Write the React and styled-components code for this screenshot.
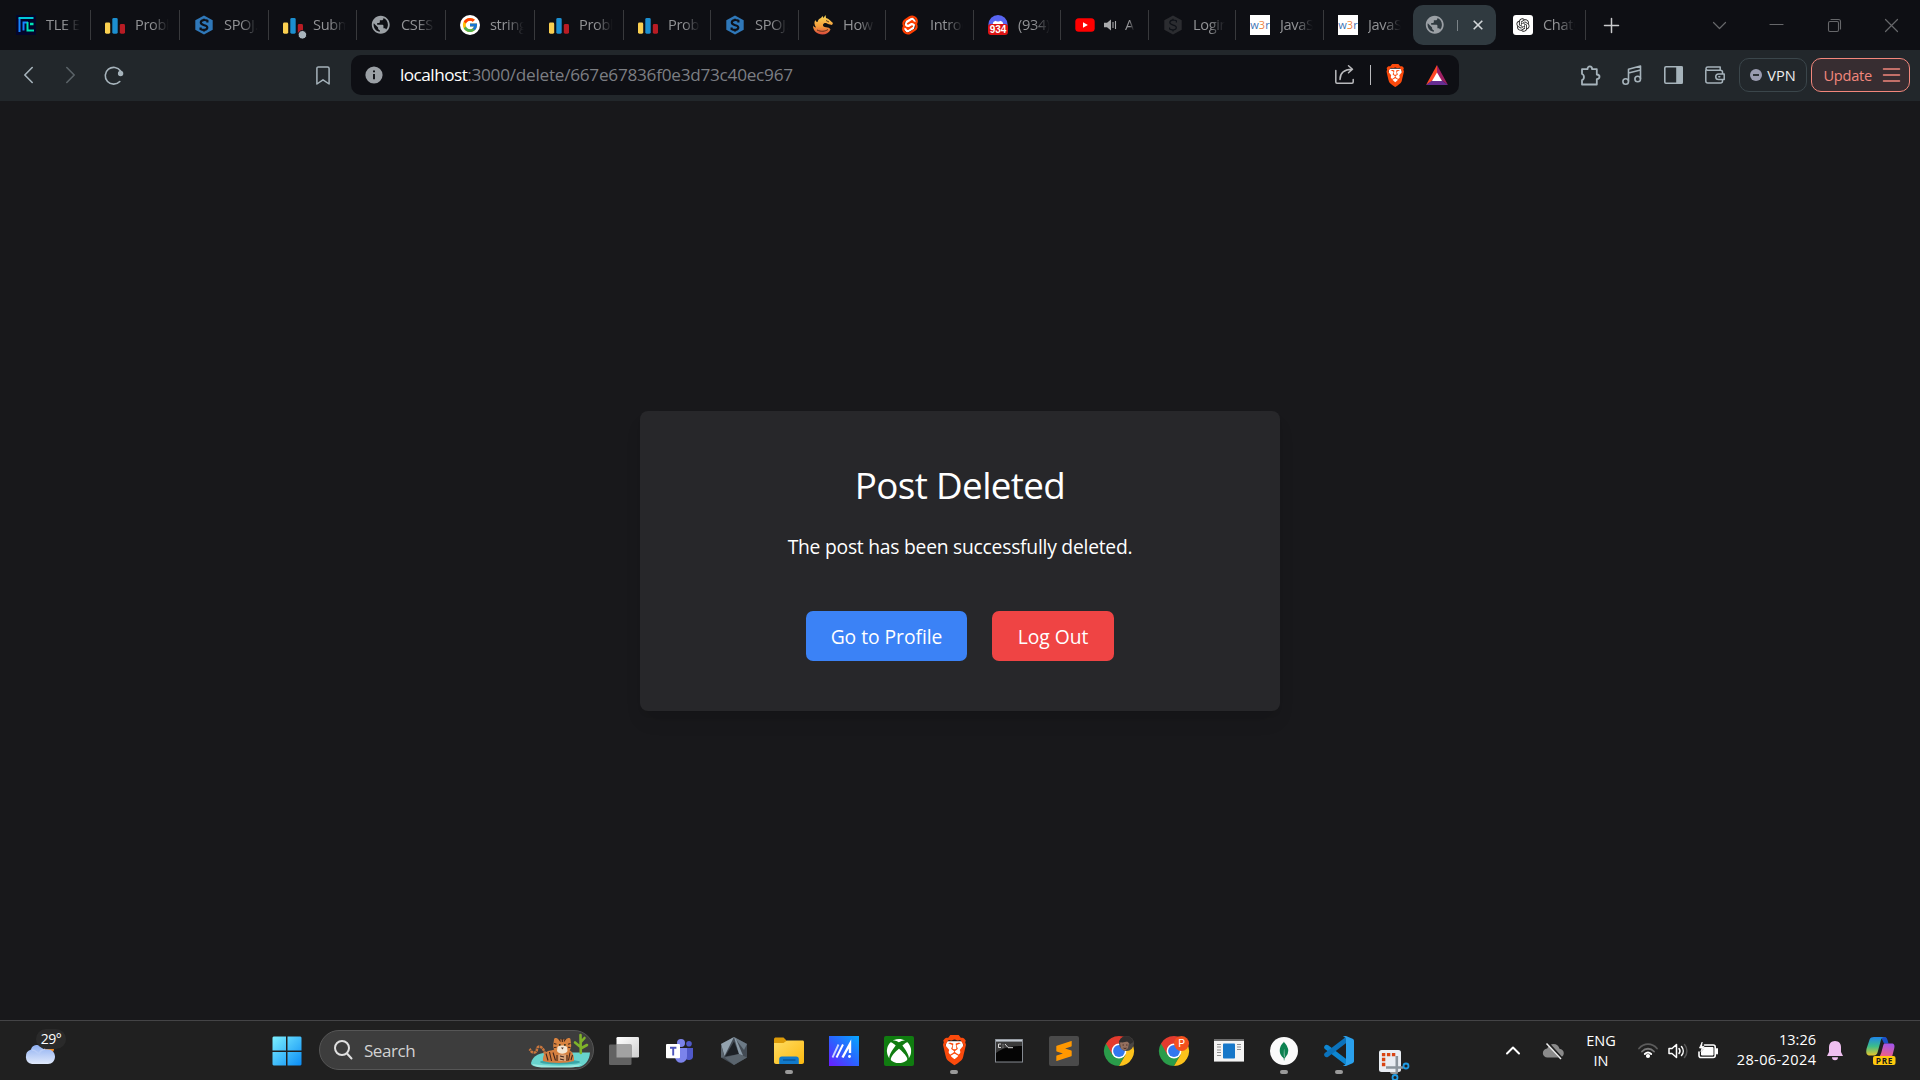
import React from 'react';
import styled, { createGlobalStyle, css } from 'styled-components';
import { SiBrave, SiSvelte, SiSublimetext, SiMongodb } from 'react-icons/si';
import { FaXbox } from 'react-icons/fa';
import { FcGoogle } from 'react-icons/fc';
import { MdPublic } from 'react-icons/md';
import { RiOpenaiFill } from 'react-icons/ri';

const GlobalStyle = createGlobalStyle`
  * { box-sizing: border-box; }
  html, body { margin: 0; padding: 0; background: #18181b; overflow: hidden; }
  body { font-family: "Open Sans", "Noto Sans", sans-serif; color: #fff; }
  svg { display: block; flex: none; overflow: visible; }
`;

const Screen = styled.div`
  width: 1920px;
  height: 1080px;
  display: flex;
  flex-direction: column;
`;

/* ---------- Tab strip ---------- */
const TabStrip = styled.header`
  height: 50px;
  flex: none;
  display: flex;
  align-items: center;
  background: #0e0f14;
  padding-left: 2px;
`;
const Tab = styled.div`
  width: ${(p) => p.$w}px;
  height: 30px;
  flex: none;
  display: flex;
  align-items: center;
  padding-left: 14px;
  padding-right: ${(p) => p.$end || 10}px;
  margin-left: ${(p) => p.$gap || 0}px;
  border-right: ${(p) => (p.$last ? 'none' : '1px solid #38393c')};
`;
const TabIcon = styled.span`
  width: 20px;
  height: 20px;
  flex: none;
  display: flex;
  align-items: center;
  justify-content: center;
  margin-right: 10px;
`;
const TabTitle = styled.span`
  flex: 1;
  min-width: 0;
  overflow: hidden;
  white-space: nowrap;
  font-size: 14.6px;
  line-height: 22px;
  padding-bottom: 2px;
  letter-spacing: -0.35px;
  color: #929396;
  -webkit-mask-image: linear-gradient(90deg, #000 50%, transparent 100%);
  mask-image: linear-gradient(90deg, #000 50%, transparent 100%);
`;
const AudioMark = styled.span`
  flex: none;
  margin-right: 8px;
  margin-left: -1px;
`;
const ActiveTab = styled.div`
  width: 83px;
  height: 40px;
  flex: none;
  display: flex;
  align-items: center;
  padding-left: 12px;
  border-radius: 10px;
  background: #303a40;
`;
const TitleSliver = styled.span`
  width: 1px;
  height: 11px;
  margin-left: 2px;
  background: #7b8388;
`;
const NewTab = styled.div`
  margin-left: 17.5px;
`;
const WindowButtons = styled.div`
  margin-left: auto;
  display: flex;
  align-items: center;
`;
const WindowButton = styled.span`
  width: 57.3px;
  height: 49px;
  display: flex;
  align-items: center;
  justify-content: center;
`;

/* ---------- Toolbar ---------- */
const Toolbar = styled.nav`
  height: 51px;
  flex: none;
  display: flex;
  align-items: center;
  padding-bottom: 1px;
  background: #22272b;
`;
const NavButtons = styled.div`
  width: 351px;
  padding: 0 7px;
  display: flex;
`;
const ToolButton = styled.span`
  width: ${(p) => p.$w || 42.5}px;
  height: 40px;
  display: flex;
  align-items: center;
  justify-content: center;
  ${(p) => p.$push && css`margin-left: auto;`}
`;
const AddressBar = styled.div`
  width: 1108px;
  height: 40px;
  border-radius: 10px;
  background: #0e0f14;
  display: flex;
  align-items: center;
  padding: 0 11px 0 14px;
`;
const Url = styled.span`
  margin-left: 17px;
  font-size: 17.2px;
  line-height: 24px;
  padding-bottom: 1px;
  letter-spacing: -0.26px;
  color: #7c7e83;
  white-space: nowrap;
`;
const Host = styled.span`
  color: #fff;
  letter-spacing: -0.53px;
`;
const AddressActions = styled.div`
  margin-left: auto;
  display: flex;
  align-items: center;
`;
const Divider = styled.span`
  width: 1px;
  height: 20px;
  background: #b9babd;
  margin: 0 14px 0 16px;
`;
const ToolGroup = styled.div`
  margin-left: auto;
  display: flex;
  align-items: center;
  padding-right: 10px;
`;
const ToolIcons = styled.div`
  display: flex;
  margin-right: 3px;
`;
const PillButton = styled.span`
  height: 34px;
  width: ${(p) => p.$w}px;
  display: flex;
  align-items: center;
  justify-content: center;
  padding-left: ${(p) => p.$shift || 0}px;
  gap: ${(p) => p.$gap}px;
  border-radius: 10px;
  border: 1px solid ${(p) => p.$line};
  background: ${(p) => p.$fill};
  color: ${(p) => p.$ink};
  font-size: 14.6px;
  line-height: 20px;
  letter-spacing: ${(p) => p.$track}px;
  margin-right: ${(p) => p.$after || 0}px;
`;

/* ---------- Page ---------- */
const Page = styled.main`
  flex: 1;
  display: flex;
  align-items: center;
  justify-content: center;
  background: #18181b;
`;
const Card = styled.section`
  width: 640px;
  height: 300px;
  padding: 52px 50px 50px;
  border-radius: 8px;
  background: #27272a;
  box-shadow: 0 12px 19px -4px rgba(0, 0, 0, 0.1), 0 5px 8px -5px rgba(0, 0, 0, 0.1);
  text-align: center;
  margin-top: 1px;
`;
const Title = styled.h1`
  margin: 0 0 24px;
  font-size: 36.8px;
  font-weight: 400;
  line-height: 45px;
  letter-spacing: -0.65px;
`;
const Message = styled.p`
  margin: 0 0 49px;
  font-size: 19.3px;
  line-height: 30px;
  letter-spacing: -0.24px;
`;
const Actions = styled.div`
  display: flex;
  justify-content: center;
  gap: 25px;
`;
const ActionButton = styled.button`
  width: ${(p) => p.$w}px;
  height: 50px;
  padding: 2px 0 0;
  border: 0;
  border-radius: 7px;
  background: ${(p) => p.$color};
  color: #fff;
  font: 400 19.3px/30px "Open Sans", "Noto Sans", sans-serif;
  letter-spacing: -0.04px;
`;

/* ---------- Taskbar ---------- */
const Taskbar = styled.footer`
  height: 60px;
  flex: none;
  display: flex;
  background: #202020;
  border-top: 1px solid #444446;
`;
const Weather = styled.div`
  width: 259.500px;
  padding: 8px 0 0 24px;
  position: relative;
`;
const Degrees = styled.span`
  position: absolute;
  left: 36px;
  top: 8px;
  width: 30px;
  height: 20px;
  border-radius: 10px;
  background: #2a2a2a;
  text-align: center;
  font-size: 14px;
  line-height: 20px;
  letter-spacing: -0.5px;
`;
const TaskSlot = styled.div`
  width: 55px;
  height: 59px;
  position: relative;
  display: flex;
  align-items: center;
  justify-content: center;
  flex: none;
  &::after {
    content: '';
    display: ${(p) => (p.$running ? 'block' : 'none')};
    position: absolute;
    left: 23.5px;
    bottom: 6px;
    width: 8px;
    height: 4px;
    border-radius: 2px;
    background: #9a9a9a;
  }
`;
const SearchBox = styled.div`
  width: 275px;
  height: 40px;
  margin: 9px 2.5px 0 4.5px;
  padding-left: 14px;
  border-radius: 20px;
  border: 1px solid #565656;
  background: #3d3d3d;
  display: flex;
  align-items: center;
  flex: none;
`;
const SearchLabel = styled.span`
  margin-left: 12px;
  padding-top: 2px;
  font-size: 17px;
  line-height: 24px;
  letter-spacing: -0.45px;
  color: #d2d2d2;
`;
const Tiger = styled.span`
  margin-left: auto;
  margin-right: 3px;
`;
const Tray = styled.div`
  margin-left: auto;
  display: flex;
  align-items: center;
  padding-right: 13px;
`;
const TrayItem = styled.span`
  width: ${(p) => p.$w}px;
  display: flex;
  justify-content: center;
`;
const TrayText = styled.div`
  width: ${(p) => p.$w}px;
  padding-bottom: ${(p) => p.$lift || 0}px;
  text-align: ${(p) => p.$align};
  font-size: 14.5px;
  line-height: 20px;
  white-space: nowrap;
`;
const DateLine = styled.div`
  letter-spacing: 0.4px;
  margin-right: -0.4px;
`;

/* ---------- Favicons ---------- */
const TleIcon = () => (
  <svg width="20" height="20" viewBox="0 0 20 20" fill="none">
    <rect width="20" height="20" fill="#03052b" />
    <path d="M3.500 17V3.500" stroke="#1684ff" strokeWidth="2" />
    <path d="M2.500 3h15" stroke="#00c9d8" strokeWidth="2" />
    <path d="M7.500 15.500V7.500H12" stroke="#1684ff" strokeWidth="2" />
    <path d="M11.500 7v8.500h6.500" stroke="#00e5b4" strokeWidth="2" />
    <path d="M14 9h3.500" stroke="#00e5b4" strokeWidth="2.500" />
  </svg>
);
const CodeforcesIcon = ({ dot }) => (
  <svg width="20" height="20" viewBox="0 0 20 20">
    <rect x="0" y="7.500" width="5.200" height="11.200" rx="1.400" fill="#fbd050" />
    <rect x="7.300" y="3" width="5.400" height="15.700" rx="1.400" fill="#1c8fd0" />
    <rect x="14.800" y="9" width="5.200" height="9.700" rx="1.400" fill="#b81c24" />
    {dot && <circle cx="19.400" cy="19.800" r="4.300" fill="#a9b5bd" stroke="#0e0f14" />}
  </svg>
);
const SpojIcon = ({ dim }) => (
  <svg width="20" height="20" viewBox="0 0 20 20">
    <path d="M10 .4 18.700 5.200v9.600L10 19.600 1.300 14.800V5.200z" fill={dim ? '#2b2c30' : '#2f78b9'} />
    <path d="M13.400 7.400V5.800C11.500 4.600 6.800 4.500 6.800 7.600c0 3.300 6.500 1.900 6.500 4.900 0 2.900-4.600 2.800-6.700 1.600v-1.700M10 3.800v2M10 14.500v2" fill="none" stroke="#0e1117" strokeWidth={dim ? 1.2 : 2.2} />
  </svg>
);
const DragonIcon = () => (
  <svg width="20" height="20" viewBox="0 0 20 20">
    <defs>
      <linearGradient id="dragon" x1="0" y1="0" x2="0" y2="1">
        <stop offset="0" stopColor="#f9d956" />
        <stop offset="0.6" stopColor="#f59a3b" />
        <stop offset="1" stopColor="#d9483c" />
      </linearGradient>
    </defs>
    <path d="M8 3 9.500 1l1 2L12.500 0l.5 3c3 .5 4.500 3 7 5l-1 2-4-1c-2-1.500-4.500-1-5 .8-.3 1.600 1 2.200 3 2.400 2 .2 3.800.6 4.500 2.300-1.500 3.500-4.500 5-8 5C4 19.500 0 16 0 10.500 1 12 2 12.500 3 12.400 1 9.500 1 7 2.500 5c.5 1.500 1 2 2 2C5 4.500 6.500 3.500 8 3z" fill="url(#dragon)" />
    <path d="M13 5.500 16 7M4 15c4 2 8 1.500 11-.5" stroke="#3c1d15" strokeWidth="0.8" fill="none" />
  </svg>
);
const DiscordIcon = () => (
  <svg width="20" height="20" viewBox="0 0 20 20">
    <circle cx="10" cy="9.500" r="9.600" fill="#5865f2" />
    <path d="M4.800 9C5 7 6 6.100 8 5.700l.7.700h2.600l.7-.7c2 .4 3 1.300 3.200 3.300z" fill="#fff" />
    <rect x="0" y="9" width="20" height="11" rx="3" fill="#dd1414" />
    <text x="10" y="17.800" textAnchor="middle" fontFamily="Liberation Sans, sans-serif" fontWeight="700" fontSize="10" fill="#fff">934</text>
  </svg>
);
const YoutubeIcon = () => (
  <svg width="20" height="20" viewBox="0 0 20 20">
    <rect x="0.300" y="3.200" width="19.400" height="13.600" rx="3.500" fill="#f00" />
    <path d="M8 7.200v5.600l4.900-2.800z" fill="#fff" />
  </svg>
);
const AudioIcon = () => (
  <svg width="13" height="14" viewBox="0 0 13 14">
    <path d="M0 4.800h3L7 1.500v11L3 9.200H0z" fill="#a9aaac" />
    <path d="M9 4v6M11.500 3v8" stroke="#a9aaac" strokeWidth="1.100" />
  </svg>
);
const W3rIcon = () => (
  <svg width="20" height="20" viewBox="0 0 20 20">
    <rect width="20" height="20" fill="#fff" />
    <text x="10" y="13.800" textAnchor="middle" fontFamily="Open Sans, sans-serif" fontSize="11" fill="#3f74b5">
      w<tspan fill="#ee8544">3</tspan>r
    </text>
  </svg>
);
const SvelteTile = () => (
  <svg width="20" height="20" viewBox="0 0 20 20">
    <path d="M6 5 12.500 2 16 6l-2 8-7 4-3.500-4z" fill="#fff" />
    <SiSvelte x="0.500" y="0.500" size={19} color="#ff3e00" />
  </svg>
);
const GoogleIcon = () => (
  <svg width="20" height="20" viewBox="0 0 20 20">
    <circle cx="10" cy="10" r="10" fill="#fff" />
    <FcGoogle x="1.500" y="1.500" size={17} />
  </svg>
);
const GptIcon = () => (
  <svg width="20" height="20" viewBox="0 0 20 20">
    <rect width="20" height="20" rx="3" fill="#fff" />
    <RiOpenaiFill x="2" y="2" size={16} color="#222" />
  </svg>
);
const GlobeIcon = () => <MdPublic size={21.500} color="#9ba0a5" />;

const TABS = [
  { w: 89, title: 'TLE Eliminators', Icon: TleIcon },
  { w: 89, title: 'Problem', Icon: CodeforcesIcon },
  { w: 89, title: 'SPOJ.com', Icon: SpojIcon },
  { w: 88, title: 'Submissions', Icon: () => <CodeforcesIcon dot /> },
  { w: 89, title: 'CSES', Icon: GlobeIcon },
  { w: 89, title: 'string', Icon: GoogleIcon },
  { w: 89, title: 'Problem', Icon: CodeforcesIcon },
  { w: 87, title: 'Problem', Icon: CodeforcesIcon },
  { w: 88, title: 'SPOJ.com', Icon: SpojIcon },
  { w: 87, title: 'How to', Icon: DragonIcon },
  { w: 88, title: 'Introduction', Icon: SvelteTile },
  { w: 87, title: '(934)', Icon: DiscordIcon },
  { w: 88, title: 'A', Icon: YoutubeIcon, audio: true, end: 14 },
  { w: 87, title: 'Login', Icon: () => <SpojIcon dim /> },
  { w: 88, title: 'JavaScript', Icon: W3rIcon },
  { w: 89, title: 'JavaScript', Icon: W3rIcon, last: true, end: 12 },
];

/* ---------- Window and toolbar glyphs ---------- */
const Glyph = ({ w, h, color = '#a6b3bb', sw = 1.5, d, children }) => (
  <svg width={w} height={h} viewBox={`0 0 ${w} ${h}`} fill="none" stroke={color} strokeWidth={sw} strokeLinecap="round" strokeLinejoin="round">
    {d && <path d={d} />}
    {children}
  </svg>
);
const BraveLogo = ({ size }) => (
  <svg width={size} height={size * 1.12} viewBox="0 0 24 24" preserveAspectRatio="none">
    <path d="M5 5h14l1 5-3 8-5 4-5-4-3-8z" fill="#fff" />
    <SiBrave x="0" y="0" size={24} color="#fb4a0c" />
  </svg>
);

/* ---------- Taskbar icons ---------- */
const CloudIcon = () => (
  <svg width="34" height="38" viewBox="0 0 34 38">
    <defs>
      <linearGradient id="cloud" x1="0" y1="0" x2="0" y2="1">
        <stop offset="0" stopColor="#8fb0f2" />
        <stop offset="1" stopColor="#e0e9fb" />
      </linearGradient>
    </defs>
    <circle cx="25" cy="20" r="5" fill="#f08a24" />
    <path d="M8 35a7.500 7.500 0 0 1-1-14.500C8 17 10.500 16 13 16c3 0 5 1.800 6.500 4.500C27 19 31 23 31 27.500c0 4.500-3 7.500-7 7.500z" fill="url(#cloud)" />
    <path d="M8 21c4 0 5 3 7 4 1-3 3-4.500 6-4.800" fill="none" stroke="#b9cdf7" strokeWidth="1.500" />
  </svg>
);
const WindowsLogo = () => (
  <svg width="30" height="30" viewBox="0 0 30 30">
    <defs>
      <linearGradient id="win" x1="0" y1="0" x2="1" y2="1">
        <stop offset="0" stopColor="#7cf0ff" />
        <stop offset="1" stopColor="#0a8cf5" />
      </linearGradient>
    </defs>
    <path d="M1.500.5H14v14H.500v-13zM15.500.5h13l1 1v13h-14zM.500 16H14v13.500H1.500l-1-1zM15.500 16h14v12.500l-1 1h-13z" fill="url(#win)" />
  </svg>
);
const TigerIcon = () => (
  <svg width="64" height="40" viewBox="0 0 64 40">
    <path d="M5 33C7 25 14 22.500 24 22.500h40c-.5 7-4 13-11 14.500H17C9 37 5 36 5 33z" fill="#68d3cd" />
    <path d="M6 34c14 2 34 3 50 0-3 2-7 3.500-11 3.500H18C11 37.500 8 36 6 34z" fill="#9be8df" />
    <ellipse cx="34" cy="32" rx="20" ry="2.500" fill="#3aa6a8" />
    <path d="M19 24c-1-6-5-8.500-7-7s0 5-3.500 5.500S5 20.500 3.500 19" fill="none" stroke="#c9763d" strokeWidth="2.500" strokeDasharray="2.600 .7" />
    <path d="M17 31c-.5-6 2-10 8-10.500l5-1.500h11c5 1.500 7.500 6 7 12-7 2.500-24 2.500-31 0z" fill="#d57f40" />
    <path d="M28 9.500c0-2 3-2 4.500 0h7.500c1.500-2 4.500-2 4.500 0l.7 6c0 5-4 8.500-9 8.500s-9-3.500-9-8.500z" fill="#d9833f" />
    <path d="M31.500 17c2-2 7-2 9.500 0l.5 4c-2 3.500-8.500 3.500-10.500 0z" fill="#f3e6d4" />
    <path d="M32.500 24.500h7.500V31h-7.500z" fill="#d9a378" />
    <path d="M33 9l1.500 2.500M36.300 8.500v3.500M39.500 9 38 11.500M28 13.500l2.500.7M44.500 13.500l-2.500.7M28 17.500l2.500-.3M44.500 17.500l-2.500-.3M20 23.500l2 7M23.500 22l2 9M27 22.500l2.500 8M31 25v6M41 25v6M44 22.500l-1.500 8M46.500 25l-1.500 5M34 26l4 1M34 29l4 1" stroke="#42271d" strokeWidth="1.100" />
    <circle cx="33.800" cy="14.800" r="0.900" fill="#1d2a1c" />
    <circle cx="38.900" cy="14.800" r="0.900" fill="#1d2a1c" />
    <path d="M35 17.500h2.800L36.400 19.400z" fill="#51342a" />
    <path d="M54.800 23 54.500 5M54.500 17l-5.500-4.500M54.700 18.500 61 15M54.500 12.500 58.500 8" fill="none" stroke="#7fb32a" strokeWidth="2.600" strokeLinecap="round" />
  </svg>
);
const TaskViewIcon = () => (
  <svg width="30" height="28" viewBox="0 0 30 28">
    <defs>
      <linearGradient id="tv" x1="0" y1="0" x2="1" y2="1">
        <stop offset="0" stopColor="#fff" />
        <stop offset="1" stopColor="#cfcfcf" />
      </linearGradient>
    </defs>
    <rect x="7.500" y="0" width="22.500" height="20.500" rx="1.300" fill="url(#tv)" />
    <rect x="0" y="7.500" width="22.500" height="20.500" rx="1.300" fill="#626262" />
    <path d="M7.500 7.500h15v13h-15z" fill="#a2a2a2" />
  </svg>
);
const TeamsIcon = () => (
  <svg width="27" height="24" viewBox="0 0 27 24">
    <circle cx="23" cy="4.800" r="2.800" fill="#5059c9" />
    <path d="M18 9h9v7.500a4 4 0 0 1-8 1z" fill="#5059c9" />
    <circle cx="15" cy="4" r="4" fill="#7b83eb" />
    <path d="M9 9h12v8.500a6 6 0 0 1-12 .5z" fill="#7b83eb" />
    <rect x="0" y="5" width="14" height="14.300" rx="1" fill="#fff" />
    <path d="M4 8.700h6.400M7.200 8.700v7.800" stroke="#4b53bc" strokeWidth="1.900" />
  </svg>
);
const HexIcon = () => (
  <svg width="26" height="28" viewBox="0 0 26 28">
    <path d="M13 0 26 7v13.500L13 28 0 20.500V7z" fill="#434b54" />
    <path d="M13 0 0 7l3.500 12z" fill="#93a2ae" />
    <path d="M13 0l13 7-3 6z" fill="#6c7a86" />
    <path d="M13 4.500 4 19.500 18 17z" fill="#1d2126" />
    <path d="M18 17 3.500 20.500 13 28l13-7.500z" fill="#5a646d" />
    <path d="M13 0l5 17 4 1.500L15 2z" fill="#8b9ba8" />
    <path d="M0 7l3.500 13.500L0 20.500z" fill="#5b656e" />
  </svg>
);
const FolderIcon = () => (
  <svg width="30" height="28" viewBox="0 0 30 28">
    <defs>
      <linearGradient id="folder" x1="0" y1="0" x2="1" y2="1">
        <stop offset="0" stopColor="#ffdc62" />
        <stop offset="1" stopColor="#fcb90f" />
      </linearGradient>
    </defs>
    <path d="M0 2.500C0 1 .8.500 2 .500h7.500L13 4v4H0z" fill="#dd9b08" />
    <path d="M0 6h9.500L13 3.500h15.500c1 0 1.500.6 1.500 1.600V25c0 1.200-.8 2-2 2H2c-1.200 0-2-.8-2-2z" fill="url(#folder)" />
    <path d="M5.200 27v-5a2.600 2.600 0 0 1 2.600-2.600h14.400A2.600 2.600 0 0 1 24.800 22v5z" fill="#117acb" />
    <path d="M9 23h12.500" stroke="#0a4d8c" strokeWidth="1.200" />
  </svg>
);
const MyAsusIcon = () => (
  <svg width="30" height="30" viewBox="0 0 30 30">
    <defs>
      <linearGradient id="asus" x1="0" y1="1" x2="1" y2="0">
        <stop offset="0" stopColor="#6a1cff" />
        <stop offset="0.500" stopColor="#2a63ff" />
        <stop offset="1" stopColor="#06a8ff" />
      </linearGradient>
    </defs>
    <rect width="30" height="30" fill="url(#asus)" />
    <path d="M3.500 21.500 9.500 8.500" stroke="#c9d6ff" strokeWidth="1.800" />
    <path d="M7.500 21.500 14 8.500" stroke="#fff" strokeWidth="2" />
    <path d="M13.500 21.500 21 8v9" stroke="#fff" strokeWidth="2.400" fill="none" />
    <circle cx="20.500" cy="20.500" r="1.400" fill="#fff" />
  </svg>
);
const XboxIcon = () => (
  <svg width="30" height="30" viewBox="0 0 30 30">
    <rect width="30" height="30" rx="2" fill="#107c10" />
    <FaXbox x="2.500" y="2.500" size={25} color="#fff" />
  </svg>
);
const CmdIcon = () => (
  <svg width="28" height="24" viewBox="0 0 28 24">
    <rect x="0.500" y="0.500" width="27" height="22.500" fill="#050505" stroke="#858a91" />
    <path d="M1 1.700h26" stroke="#c3cad2" strokeWidth="2" />
    <path d="M1 3v11C9 8 17 7 27 7V3z" fill="#3b3b3b" />
    <path d="M6 5H3.500v3.500H6M8 5.500v.8M8 7.700v.8M10 5l3 3.500M13 8.700h5" fill="none" stroke="#d8d8d8" />
  </svg>
);
const SublimeTile = () => (
  <svg width="30" height="30" viewBox="0 0 30 30">
    <rect width="30" height="30" rx="2" fill="#4a4a4a" />
    <SiSublimetext x="5" y="5" size={20} color="#ff9800" />
  </svg>
);
const ChromeIcon = ({ badge }) => (
  <svg width="30" height="30" viewBox="0 0 30 30">
    <path d="M2 7.500A15 15 0 0 0 15 30l6.500-11.300z" fill="#2a9c4a" />
    <path d="M15 7.500h13a15 15 0 0 1-13 22.500l6.500-11.300z" fill="#fcc21b" />
    <path d="M2 7.500A15 15 0 0 1 28 7.500H15L8.500 18.700z" fill="#e33b2e" />
    <circle cx="15" cy="15" r="7.400" fill="#fff" />
    <circle cx="15" cy="15" r="5.900" fill="#3277ee" />
    {badge === 'P' ? (
      <>
        <circle cx="22.500" cy="7.500" r="7.500" fill="#f4511e" />
        <text x="22.500" y="11.300" textAnchor="middle" fontFamily="Roboto, sans-serif" fontSize="10.500" fill="#fff">P</text>
      </>
    ) : (
      <>
        <circle cx="22.500" cy="7.500" r="7.500" fill="#4a4643" />
        <path d="M16 7c2-3 7-3 9 0l-1 5c-2 3-5 3-7 .5z" fill="#94705f" />
        <path d="M15.300 6c1-7 12-8 14 0l-3 2-3-2.500-5 1z" fill="#302e2e" />
        <path d="M18.500 9h1.500M22 9h1.500M19.500 12c1 .5 2 .5 3 0" stroke="#4a2e25" strokeWidth="0.900" />
      </>
    )}
  </svg>
);
const PanelsIcon = () => (
  <svg width="30" height="23" viewBox="0 0 30 23">
    <rect width="30" height="23" fill="#f4f4f4" />
    <path d="M0 1h30" stroke="#6f6f6f" strokeWidth="2" />
    <path d="M0 22.500h30" stroke="#999" />
    <rect x="9" y="4.500" width="12" height="15" rx="0.800" fill="#1677c9" />
    <path d="M3 5.500h4M3 8h4M3 11h4M3 13.500h4M3 16.500h4M23 5.500h4M23 8h4M23 10.500h4" stroke="#8d8d8d" />
  </svg>
);
const MongoIcon = () => (
  <svg width="28" height="28" viewBox="0 0 28 28">
    <circle cx="14" cy="14" r="14" fill="#fafafa" />
    <SiMongodb x="4.500" y="4.500" size={19} color="#0c8150" />
  </svg>
);
const VsCodeIcon = () => (
  <svg width="30" height="30" viewBox="0 0 30 30">
    <path d="M2.700 11.300 22 26" stroke="#0e86d1" strokeWidth="5" strokeLinecap="round" />
    <path d="M2.700 18.700 22 4" stroke="#0b72bb" strokeWidth="5" strokeLinecap="round" />
    <path d="M22 0l6.500 2.800c1 .4 1.500 1.200 1.500 2.200v20c0 1-.5 1.800-1.500 2.200L22 30c-1.400.3-2.300-.2-3-1 1.700.3 3-.5 3-2V3c0-1.500-1.300-2.300-3-2 .7-.8 1.600-1.300 3-1z" fill="#2aa0ec" />
  </svg>
);
const SnipWrap = styled.span`
  padding-top: 29px;
  z-index: 1;
`;
const SnipIcon = () => (
  <svg width="30" height="31" viewBox="0 0 30 31">
    <rect width="22" height="22" rx="2.500" fill="#e9edf3" />
    <path d="M4.600 16.200V2.900" fill="none" stroke="#d94413" strokeWidth="3.400" strokeDasharray="3.400 1.600" />
    <path d="M7.900 4.600H16.500" fill="none" stroke="#d94413" strokeWidth="3.400" strokeDasharray="3.400 1.600" />
    <path d="M17.800 6v17.500M7 17.500h17.500" stroke="#8b949c" strokeWidth="2.600" />
    <circle cx="27" cy="16" r="2.500" fill="none" stroke="#1f9be4" strokeWidth="1.800" />
    <circle cx="16" cy="27.500" r="2.500" fill="none" stroke="#1f9be4" strokeWidth="1.800" />
  </svg>
);
const CopilotIcon = () => (
  <svg width="30" height="30" viewBox="0 0 30 30">
    <defs>
      <linearGradient id="cpA" x1="0" y1="0" x2="0" y2="1">
        <stop offset="0" stopColor="#1f86ea" />
        <stop offset="0.500" stopColor="#3bbd8a" />
        <stop offset="1" stopColor="#e8c62a" />
      </linearGradient>
      <linearGradient id="cpB" x1="0.600" y1="0" x2="0.300" y2="1">
        <stop offset="0" stopColor="#a455ea" />
        <stop offset="1" stopColor="#f5607c" />
      </linearGradient>
    </defs>
    <path d="M15 1h3.500c2.500 0 3 2.500 4 6.500h-4.500z" fill="#1b50c8" />
    <path d="M8 1h10c-2.500.3-3 2.500-3.600 5l-2.700 10c-.6 2.300-1.700 3.500-3.700 3.500H4C.5 19.500-.3 17 .6 12.500l3-9C4.300 1.700 6 1 8 1z" fill="url(#cpA)" />
    <path d="M19 7.500h6.500c2.800 0 3.500 2 2.700 5L26 21H13c1-1 1.700-2.500 2.200-4l2-7.500c.4-1.500 1-2 1.800-2z" fill="url(#cpB)" />
    <rect x="7" y="20" width="22.500" height="9" rx="2" fill="#ffc90d" />
    <text x="18.500" y="27.500" textAnchor="middle" fontFamily="Open Sans, sans-serif" fontWeight="700" fontSize="8.300" letterSpacing="0.700" fill="#1a1a1a">PRE</text>
  </svg>
);

const APPS = [
  { Icon: TaskViewIcon },
  { Icon: TeamsIcon },
  { Icon: HexIcon },
  { Icon: FolderIcon, running: true },
  { Icon: MyAsusIcon },
  { Icon: XboxIcon },
  { Icon: () => <BraveLogo size={27} />, running: true },
  { Icon: CmdIcon },
  { Icon: SublimeTile },
  { Icon: ChromeIcon },
  { Icon: () => <ChromeIcon badge="P" /> },
  { Icon: PanelsIcon },
  { Icon: MongoIcon, running: true },
  { Icon: VsCodeIcon, running: true },
  { Icon: () => <SnipWrap><SnipIcon /></SnipWrap>, running: true },
];

export default function App() {
  return (
    <Screen>
      <GlobalStyle />
      <TabStrip>
        {TABS.map(({ w, title, Icon, audio, last, end }, i) => (
          <Tab key={i} $w={w} $last={last} $end={end}>
            <TabIcon><Icon /></TabIcon>
            {audio && <AudioMark><AudioIcon /></AudioMark>}
            <TabTitle>{title}</TabTitle>
          </Tab>
        ))}
        <ActiveTab>
          <TabIcon><GlobeIcon /></TabIcon>
          <TitleSliver />
          <svg width="10" height="10" viewBox="0 0 10 10" style={{ marginLeft: 15 }}>
            <path d="M.7.700l8.600 8.600M9.300.700.700 9.300" stroke="#d3d7d9" strokeWidth="1.600" />
          </svg>
        </ActiveTab>
        <Tab $w={87} $gap={3}>
          <TabIcon><GptIcon /></TabIcon>
          <TabTitle>ChatGPT</TabTitle>
        </Tab>
        <NewTab><Glyph w={15} h={15} color="#c9cacc" sw={1.500} d="M7.500.5v14M.5 7.500h14" /></NewTab>
        <WindowButtons>
          <WindowButton><Glyph w={13} h={7} color="#66676a" sw={1.200} d="M.5.5l6 6 6-6" /></WindowButton>
          <WindowButton><Glyph w={13} h={2} color="#66676a" sw={1.200} d="M0 .5h13" /></WindowButton>
          <WindowButton>
            <Glyph w={13} h={13} color="#66676a" sw={1.100}>
              <rect x="0.500" y="2.500" width="10" height="10" rx="1.500" />
              <path d="M3 .5h7.500a2 2 0 0 1 2 2V10" />
            </Glyph>
          </WindowButton>
          <WindowButton><Glyph w={13} h={13} color="#66676a" sw={1.200} d="M.5.5l12 12M12.500.5l-12 12" /></WindowButton>
        </WindowButtons>
      </TabStrip>

      <Toolbar>
        <NavButtons>
          <ToolButton><Glyph w={9} h={16} sw={1.600} d="M8.200.5.800 8l7.400 7.500" /></ToolButton>
          <ToolButton><Glyph w={9} h={16} color="#5b6368" sw={1.600} d="M.8.500 8.200 8 .8 15.500" /></ToolButton>
          <ToolButton>
            <Glyph w={19} h={19} sw={1.600}>
              <path d="M15.800 15.500A8.400 8.400 0 1 1 16.600 5" />
              <circle cx="16.600" cy="7.500" r="1.900" fill="#a6b3bb" />
            </Glyph>
          </ToolButton>
          <ToolButton $push><Glyph w={14} h={19} d="M.9 18V2.500c0-1 .6-1.600 1.600-1.600h9c1 0 1.600.6 1.600 1.600V18L7 13.800z" /></ToolButton>
        </NavButtons>
        <AddressBar>
          <svg width="18" height="18" viewBox="0 0 18 18">
            <circle cx="9" cy="9" r="8.600" fill="#9ba0a5" />
            <path d="M9 8v5.200M9 4.500v1.800" stroke="#0e0f14" strokeWidth="1.900" />
          </svg>
          <Url><Host>localhost</Host>:3000/delete/667e67836f0e3d73c40ec967</Url>
          <AddressActions>
            <Glyph w={19} h={19} color="#b9babd" sw={1.500} d="M.8 5.500V17c0 .8.400 1.200 1.200 1.200h15c.8 0 1.200-.4 1.200-1.200v-2.500M5 14.500c0-6 4-10 12-10.200M13.500.800l4 3.500-4 3.500" />
            <Divider />
            <BraveLogo size={20.500} />
            <svg width="22" height="20" viewBox="0 0 22 20" style={{ marginLeft: 20.500 }}>
              <path d="M11 0 0 20l11-7z" fill="#ff4724" />
              <path d="M11 0l11 20-11-8z" fill="#9e1f63" />
              <path d="M0 20h22l-6-4.500H6z" fill="#662d91" />
              <path d="M11 7.500 6 16h10z" fill="#fff" />
            </svg>
          </AddressActions>
        </AddressBar>
        <ToolGroup>
          <ToolIcons>
            <ToolButton $w={41.700}>
              <Glyph w={21} h={21} sw={1.800} d="M2 4.200h5.500c0-3.800 4.600-3.800 4.600 0h4.700v5.300c3.600.2 3.600 4.400 0 4.600v5.400H2v-4.300c2.600-.8 2.600-5.400 0-6.200z" />
            </ToolButton>
            <ToolButton $w={41.700}>
              <Glyph w={20} h={20} sw={1.600}>
                <path d="M6.500 16V4.200L18.500 1v12.500M6.500 8l12-3" />
                <circle cx="3.700" cy="16.500" r="2.800" />
                <circle cx="15.700" cy="14" r="2.800" />
              </Glyph>
            </ToolButton>
            <ToolButton $w={41.700}>
              <Glyph w={19} h={18} sw={1.600}>
                <rect x="0.800" y="0.800" width="17.400" height="16.400" rx="1.200" />
                <path d="M13 1h5v16h-5z" fill="#a6b3bb" />
              </Glyph>
            </ToolButton>
            <ToolButton $w={41.700}>
              <Glyph w={20} h={18} sw={1.500}>
                <path d="M.8 4V15c0 1.200.7 2 2 2h12.700c1.200 0 2-.7 2-2V6c0-1.200-.7-1.800-2-1.800H2.500C.3 4 .5 1 2.800 1h12.400v3" />
                <path d="M19.200 8h-5.700a2.700 2.700 0 0 0 0 5.500h5.700z" fill="#22272b" />
                <path d="M13.800 10.800h1" />
              </Glyph>
            </ToolButton>
          </ToolIcons>
          <PillButton $w={68} $gap={5} $line="#3b464b" $fill="#22272b" $ink="#eceeef" $track={0} $after={4}>
            <svg width="12" height="12" viewBox="0 0 12 12">
              <circle cx="6" cy="6" r="6" fill="#9a9bb0" />
              <path d="M3 6h6" stroke="#22272b" strokeWidth="1.800" />
            </svg>
            VPN
          </PillButton>
          <PillButton $w={99} $gap={11} $shift={2.500} $line="#f2877c" $fill="#372d31" $ink="#f2877c" $track={-0.250}>
            Update
            <Glyph w={17} h={14} color="#f2877c" sw={1.500} d="M.5 1h16M.5 7h16M.5 13h16" />
          </PillButton>
        </ToolGroup>
      </Toolbar>

      <Page>
        <Card>
          <Title>Post Deleted</Title>
          <Message>The post has been successfully deleted.</Message>
          <Actions>
            <ActionButton $w={161} $color="#3b82f6">Go to Profile</ActionButton>
            <ActionButton $w={122} $color="#ef4444">Log Out</ActionButton>
          </Actions>
        </Card>
      </Page>

      <Taskbar>
        <Weather>
          <CloudIcon />
          <Degrees>29°</Degrees>
        </Weather>
        <TaskSlot><WindowsLogo /></TaskSlot>
        <SearchBox>
          <Glyph w={18} h={20} color="#e0e0e0" sw={2}>
            <circle cx="8" cy="8" r="7" />
            <path d="M13 13.500l4.500 5" />
          </Glyph>
          <SearchLabel>Search</SearchLabel>
          <Tiger><TigerIcon /></Tiger>
        </SearchBox>
        {APPS.map(({ Icon, running }, i) => (
          <TaskSlot key={i} $running={running}><Icon /></TaskSlot>
        ))}
        <Tray>
          <TrayItem $w={34}><Glyph w={14} h={9} color="#fff" sw={2} d="M1 7.500 7 1.500l6 6" /></TrayItem>
          <TrayItem $w={46}>
            <svg width="21" height="16" viewBox="0 0 21 16">
              <path d="M4.500 14.500a4.500 4.500 0 0 1-.3-9C5.500 2.500 8 1 10.500 1c3 0 5.300 1.800 6 4.700 2.500.3 4.300 2 4.300 4.500s-2 4.300-4.300 4.300z" fill="#8a8a8a" />
              <path d="M5 0.500 19 16" stroke="#202020" strokeWidth="3" />
              <path d="M3.500.5 18 16" stroke="#eee" strokeWidth="1.500" />
            </svg>
          </TrayItem>
          <TrayText $w={50} $align="center">ENG<br />IN</TrayText>
          <TrayItem $w={44}>
            <Glyph w={20} h={15} color="#fff" sw={1.800}>
              <path d="M1 5.500C6-.3 14-.3 19 5.500" stroke="#5b5b5b" />
              <path d="M4 8.500c3.500-3.700 8.500-3.700 12 0" stroke="#777" />
              <path d="M6.800 11c2-2 4.400-2 6.400 0" />
              <circle cx="10" cy="13" r="1.200" fill="#fff" />
            </Glyph>
          </TrayItem>
          <TrayItem $w={16}>
            <Glyph w={20} h={16} color="#fff" sw={1.500}>
              <path d="M1 5.500h3L8.500 1.500v13L4 10.500H1z" />
              <path d="M11 5.500c1.200 1.500 1.200 3.500 0 5M13.500 3.500c2.300 2.600 2.300 6.400 0 9" />
              <path d="M16.500 1.500c3.200 3.600 3.200 9.400 0 13" stroke="#555" />
            </Glyph>
          </TrayItem>
          <TrayItem $w={44}>
            <Glyph w={20} h={17} color="#fff" sw={1.600}>
              <path d="M6.500 3h8.700c1.300 0 2 .7 2 2v8.500c0 1.300-.7 2-2 2H3c-1.300 0-2-.7-2-2V10" />
              <path d="M6.500 5.500H15v7.500H3.500V10z" fill="#fff" strokeWidth="1" />
              <path d="M4 .5 1.500 6H4L3 9.500 6 4.500H4z" fill="#fff" strokeWidth="0.800" />
              <path d="M19 7v4.500" strokeWidth="2" />
            </Glyph>
          </TrayItem>
          <TrayText $w={86} $align="right" $lift={2}>
            13:26
            <DateLine>28-06-2024</DateLine>
          </TrayText>
          <TrayItem $w={38}>
            <svg width="16" height="19" viewBox="0 0 16 19">
              <path d="M8 0c4 0 6 2.800 6 6.200V11l2 4H0l2-4V6.200C2 2.800 4 0 8 0z" fill="#efbff0" />
              <path d="M5 16.200h6a3 3 0 0 1-6 0z" fill="#efbff0" />
            </svg>
          </TrayItem>
          <TrayItem $w={53}><CopilotIcon /></TrayItem>
        </Tray>
      </Taskbar>
    </Screen>
  );
}
